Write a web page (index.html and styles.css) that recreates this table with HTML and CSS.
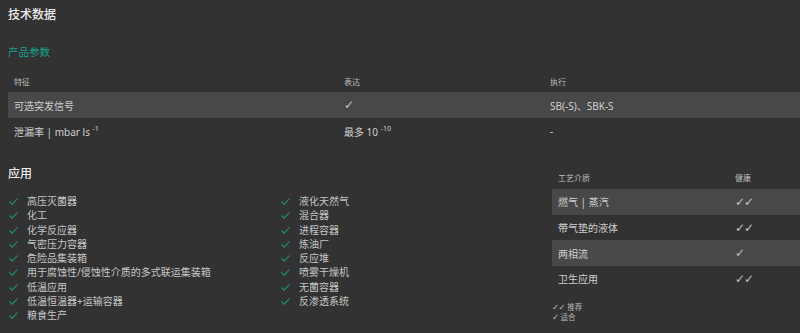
FILE: index.html
```html
<!DOCTYPE html>
<html lang="zh-CN">
<head>
<meta charset="utf-8">
<title>技术数据</title>
<link rel="stylesheet" href="styles.css">
</head>
<body>
<h1 class="page-title">技术数据</h1>

<h2 class="sub-title">产品参数</h2>
<table class="spec">
  <colgroup><col class="c1"><col class="c2"><col></colgroup>
  <thead>
    <tr><th>特征</th><th>表达</th><th>执行</th></tr>
  </thead>
  <tbody>
    <tr class="shade"><td>可选突发信号</td><td><span class="tick">✓</span></td><td>SB(-S)、SBK-S</td></tr>
    <tr><td>泄漏率 | mbar ls <sup>-1</sup></td><td>最多 10 <sup>-10</sup></td><td>-</td></tr>
  </tbody>
</table>

<section class="apps">
  <div class="apps-main">
    <h2 class="apps-title">应用</h2>
    <div class="apps-cols">
      <ul class="check-list">
        <li>高压灭菌器</li>
        <li>化工</li>
        <li>化学反应器</li>
        <li>气密压力容器</li>
        <li>危险品集装箱</li>
        <li>用于腐蚀性/侵蚀性介质的多式联运集装箱</li>
        <li>低温应用</li>
        <li>低温恒温器+运输容器</li>
        <li>粮食生产</li>
      </ul>
      <ul class="check-list">
        <li>液化天然气</li>
        <li>混合器</li>
        <li>进程容器</li>
        <li>炼油厂</li>
        <li>反应堆</li>
        <li>喷雾干燥机</li>
        <li>无菌容器</li>
        <li>反渗透系统</li>
      </ul>
    </div>
  </div>

  <div class="apps-side">
    <table class="media">
      <colgroup><col class="m1"><col></colgroup>
      <thead>
        <tr><th>工艺介质</th><th>健康</th></tr>
      </thead>
      <tbody>
        <tr class="shade"><td>燃气 | 蒸汽</td><td><span class="tick">✓✓</span></td></tr>
        <tr><td>带气垫的液体</td><td><span class="tick">✓✓</span></td></tr>
        <tr class="shade"><td>两相流</td><td><span class="tick">✓</span></td></tr>
        <tr><td>卫生应用</td><td><span class="tick">✓✓</span></td></tr>
      </tbody>
    </table>
    <div class="legend">
      <div><span class="mini-tick">✓✓</span> 推荐</div>
      <div><span class="mini-tick">✓</span> 适合</div>
    </div>
  </div>
</section>
</body>
</html>
```

FILE: styles.css
```css
html, body {
  margin: 0;
  padding: 0;
}

body {
  background: #323232;
  color: #cfcfcf;
  font-family: "Noto Sans", "Noto Sans CJK SC", sans-serif;
  padding-left: 8px;
  overflow: hidden;
}

.page-title {
  margin: 0;
  font-size: 12px;
  line-height: 30px;
  font-weight: 500;
  color: #ececec;
}

.sub-title {
  margin: 14px 0 0;
  font-size: 10.5px;
  line-height: 16px;
  font-weight: 400;
  color: #17a08b;
}

/* product parameter table */
.spec {
  margin-top: 10px;
  width: 792px;
  border-collapse: collapse;
  table-layout: fixed;
}

.spec .c1 { width: 330px; }
.spec .c2 { width: 206px; }

.spec th,
.media th {
  text-align: left;
  font-weight: 400;
  font-size: 8px;
  color: #bdbdbd;
  padding: 0 0 0 6px;
}

.spec th { height: 22px; }

.spec td {
  height: 26px;
  padding: 0 0 0 6px;
  font-size: 10px;
  color: #cfcfcf;
  white-space: nowrap;
}

.shade td { background: #484848; }

sup {
  font-size: 7px;
  vertical-align: 5px;
  line-height: 0;
}

.tick {
  font-family: "DejaVu Sans", sans-serif;
  font-size: 12px;
  letter-spacing: -1px;
  color: #c4c4c4;
}

/* applications */
.apps {
  margin-top: 21px;
  display: flex;
  align-items: flex-start;
}

.apps-main {
  width: 544px;
  flex: none;
}

.apps-title {
  margin: 0;
  font-size: 12px;
  line-height: 18px;
  font-weight: 500;
  color: #ececec;
}

.apps-cols {
  display: flex;
  margin-top: 11px;
}

.check-list {
  list-style: none;
  margin: 0;
  padding: 0;
  width: 274px;
}

.check-list li {
  position: relative;
  padding-left: 19px;
  font-size: 10px;
  line-height: 14.3px;
  color: #c6c6c6;
  white-space: nowrap;
}

.check-list li::before {
  content: "";
  position: absolute;
  left: 1px;
  top: 4px;
  width: 9px;
  height: 7px;
  background: url("data:image/svg+xml,%3Csvg xmlns='http://www.w3.org/2000/svg' width='9' height='7' viewBox='0 0 9 7'%3E%3Cpolyline points='0.5,3.5 3.2,6.2 8.5,0.5' fill='none' stroke='%23199282' stroke-width='1.1'/%3E%3C/svg%3E") no-repeat;
}

.apps-side {
  flex: 1;
}

.media {
  width: 100%;
  border-collapse: collapse;
  table-layout: fixed;
  margin-top: 1px;
}

.media .m1 { width: 177px; }

.media th { height: 23px; }

.media td {
  height: 25.7px;
  padding: 0 0 0 6px;
  font-size: 10px;
  color: #cfcfcf;
}

.legend {
  margin-top: 10px;
  font-size: 7.5px;
  line-height: 10.3px;
  color: #b8b8b8;
}

.mini-tick {
  font-family: "DejaVu Sans", sans-serif;
  font-size: 8.5px;
  letter-spacing: -0.5px;
}
```
